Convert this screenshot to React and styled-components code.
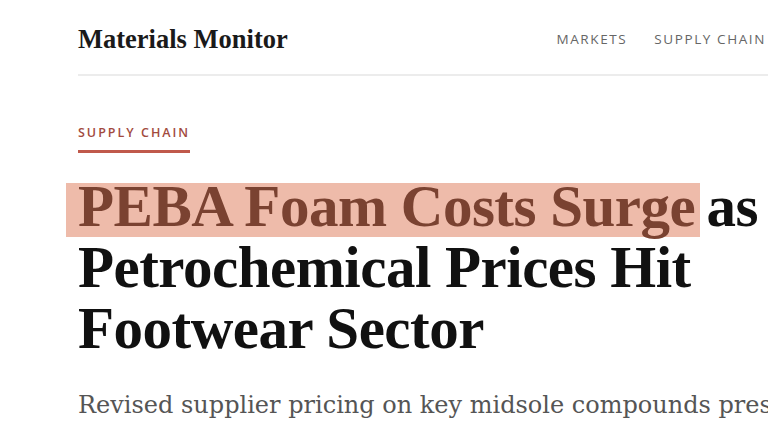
import React from "react";
import styled, { createGlobalStyle } from "styled-components";

const GlobalStyle = createGlobalStyle`
  html, body {
    margin: 0;
    padding: 0;
    background: #ffffff;
    overflow: hidden;
  }
  body {
    width: 768px;
    height: 430px;
  }
`;

const Page = styled.div`
  width: 720px;
  padding-left: 78px;
`;

const Header = styled.header`
  display: flex;
  align-items: center;
  justify-content: space-between;
  height: 76px;
  border-bottom: 2px solid #ececec;
  box-sizing: border-box;
`;

const Logo = styled.div`
  font-family: "Liberation Serif", serif;
  font-weight: 700;
  font-size: 26.5px;
  color: #1a1a1a;
  padding-top: 4px;
`;

const Nav = styled.nav`
  display: flex;
  gap: 27px;
  padding-right: 32px;
  padding-top: 3px;
`;

const NavLink = styled.a`
  font-family: "Open Sans", sans-serif;
  font-size: 13.5px;
  letter-spacing: 1.6px;
  color: #666666;
  text-transform: uppercase;
`;

const Kicker = styled.div`
  display: inline-block;
  margin-top: 48px;
  padding-bottom: 9px;
  border-bottom: 3px solid #c0594b;
  font-family: "Open Sans", sans-serif;
  font-weight: 600;
  font-size: 12.5px;
  letter-spacing: 2px;
  color: #a24a3e;
`;

const Headline = styled.h1`
  margin: 23px 0 0;
  font-family: "Liberation Serif", serif;
  font-weight: 700;
  font-size: 59px;
  line-height: 61px;
  color: #111111;
  letter-spacing: -0.5px;
`;

const Mark = styled.mark`
  background: linear-gradient(#eebbaa, #eebbaa) 0 10px / 100% 54px no-repeat;
  color: #7a4231;
  padding: 0 5px 0 12px;
  margin: 0 -8px 0 -12px;
`;

const Dek = styled.p`
  margin: 32px 0 0;
  font-family: "DejaVu Serif", serif;
  font-size: 24px;
  line-height: 28px;
  color: #555555;
  white-space: nowrap;
`;

export default function App() {
  return (
    <>
      <GlobalStyle />
      <Page>
        <Header>
          <Logo>Materials Monitor</Logo>
          <Nav>
            <NavLink>Markets</NavLink>
            <NavLink>Supply Chain</NavLink>
          </Nav>
        </Header>
        <Kicker>SUPPLY CHAIN</Kicker>
        <Headline>
          <Mark>PEBA Foam Costs Surge</Mark> as Petrochemical Prices Hit
          Footwear Sector
        </Headline>
        <Dek>
          Revised supplier pricing on key midsole compounds pressures margins
          across the sector
        </Dek>
      </Page>
    </>
  );
}
